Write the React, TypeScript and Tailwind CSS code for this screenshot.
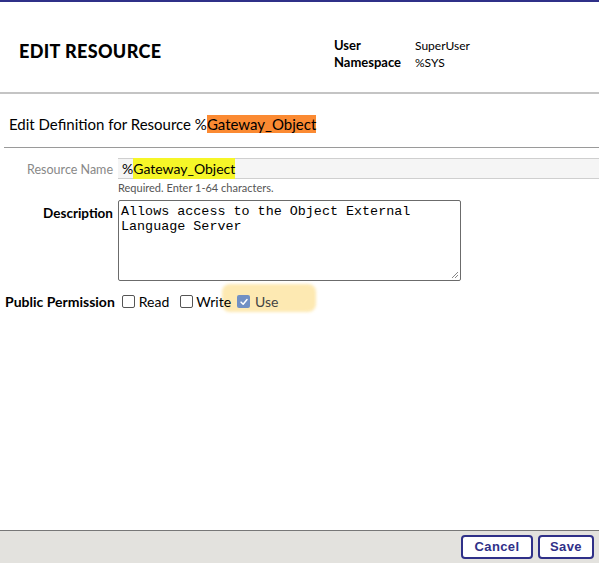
import React from "react";

const futura = "font-['Lato','Liberation_Sans',sans-serif]";

function Box({ checked }: { checked?: boolean }) {
  if (checked) {
    return (
      <span className="inline-flex h-[13px] w-[13px] items-center justify-center rounded-[2px] bg-[#7190c4]">
        <svg viewBox="0 0 12 12" className="h-[10px] w-[10px]">
          <path d="M2.5 6.2 L5 8.6 L9.6 3" fill="none" stroke="#fff" strokeWidth="1.8" strokeLinecap="round" strokeLinejoin="round" />
        </svg>
      </span>
    );
  }
  return <span className="inline-block h-[13px] w-[13px] rounded-[2px] border border-[#555] bg-white" />;
}

export default function App() {
  return (
    <div className={`flex h-screen flex-col overflow-hidden bg-white text-black ${futura}`}>
      <div className="h-[2px] bg-[#2f3088]" />
      <header className="flex h-[92px] items-center border-b-2 border-[#c4c4c4] pt-[8px]">
        <h1 className="ml-[19px] w-[315px] text-[18px] font-black tracking-[0.02em]">EDIT RESOURCE</h1>
        <div className="mt-[5px] grid grid-cols-[81px_auto] text-[12px] leading-[17px]">
          <span className="font-bold text-[13px]">User</span>
          <span>SuperUser</span>
          <span className="font-bold text-[13px]">Namespace</span>
          <span>%SYS</span>
        </div>
      </header>

      <div className="ml-[4px] mt-[20px] border-b border-[#9a9a9a] pb-[12px]">
        <h2 className="ml-[5px] text-[15px] leading-[21px]">
          Edit Definition for Resource %<span className="bg-[#fb8a32]">Gateway_Object</span>
        </h2>
      </div>

      <div className="mt-[10px] grid grid-cols-[113px_1fr] items-start gap-x-[5px]">
        <label className="pt-[3px] text-right text-[12.5px] text-[#888]">Resource Name</label>
        <div>
          <div className="flex h-[21px] items-center border-y border-[#cfcfcf] bg-[#f5f5f5] pl-[4px] text-[14px]">
            %<span className="bg-[#f6f628]">Gateway_Object</span>
          </div>
          <p className="mt-[1px] text-[11px] leading-[16px] text-[#555]">Required. Enter 1-64 characters.</p>
        </div>

        <label className="mt-[4px] pt-[3px] text-right text-[13.5px] font-bold">Description</label>
        <div className="mt-[4px]">
          <div className="relative h-[81px] w-[343px] rounded-[2px] border border-[#6b6b6b] px-[2px] pt-[3px] font-['Liberation_Mono',monospace] text-[13.4px] leading-[15px]">
            Allows access to the Object External
            <br />
            Language Server
            <svg className="absolute bottom-[1px] right-[1px] h-[8px] w-[8px]" viewBox="0 0 8 8">
              <path d="M7 1 L1 7 M7 4 L4 7" stroke="#888" strokeWidth="1" />
            </svg>
          </div>
        </div>
      </div>

      <div className="relative mt-[10px] flex items-center text-[14px]">
        <span className="absolute left-[222px] top-[-7px] h-[28px] w-[94px] rounded-[8px] bg-[#fde9b2] blur-[1.5px]" />
        <span className="ml-[5px] font-bold">Public Permission</span>
        <span className="relative ml-[7px] flex items-center gap-[4px]">
          <Box />
          <span>Read</span>
        </span>
        <span className="relative ml-[11px] flex items-center gap-[3px]">
          <Box />
          <span>Write</span>
        </span>
        <span className="relative ml-[6px] flex items-center gap-[5px]">
          <Box checked />
          <span className="text-[#444]">Use</span>
        </span>
      </div>

      <div className="flex-1" />

      <footer className="flex h-[33px] items-center justify-end gap-[5px] border-t border-[#777] bg-[#e3e2de] pr-[5px] font-['Liberation_Sans',Arial,sans-serif]">
        <button className="h-[24px] w-[72px] rounded-[4px] border-2 border-[#2f3088] bg-white text-[13px] font-bold tracking-[0.03em] text-[#2f3088]">
          Cancel
        </button>
        <button className="h-[24px] w-[56px] rounded-[4px] border-2 border-[#2f3088] bg-white text-[13px] font-bold tracking-[0.03em] text-[#2f3088]">
          Save
        </button>
      </footer>
    </div>
  );
}
